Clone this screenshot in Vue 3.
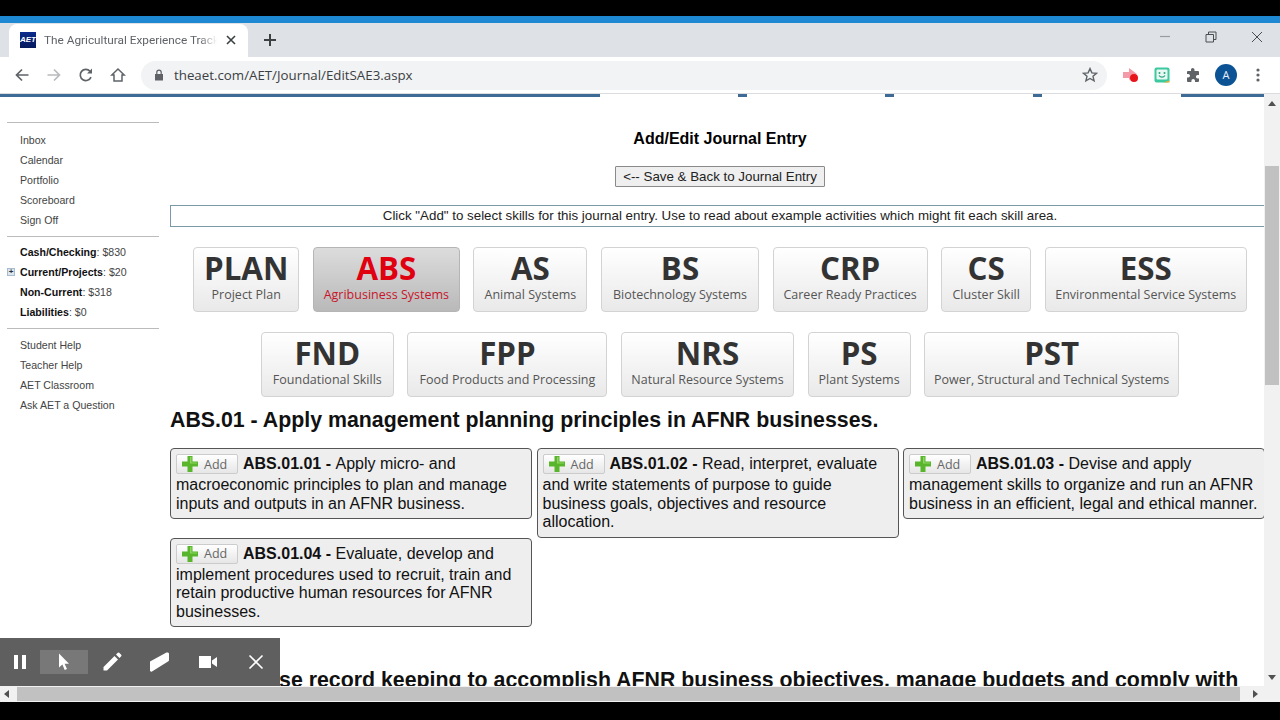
<script setup>
const navGaps = [
  { w: 600, on: true }, { w: 138, on: false }, { w: 9, on: true }, { w: 138, on: false },
  { w: 9, on: true }, { w: 139, on: false }, { w: 9, on: true }, { w: 139, on: false }, { w: 83, on: true }
]
const links1 = ['Inbox', 'Calendar', 'Portfolio', 'Scoreboard', 'Sign Off']
const money = [
  { k: 'Cash/Checking', v: '$830' },
  { k: 'Current/Projects', v: '$20', plus: true },
  { k: 'Non-Current', v: '$318' },
  { k: 'Liabilities', v: '$0' }
]
const links2 = ['Student Help', 'Teacher Help', 'AET Classroom', 'Ask AET a Question']
const row1 = [
  { c: 'PLAN', t: 'Project Plan', w: 106 },
  { c: 'ABS', t: 'Agribusiness Systems', w: 147, active: true },
  { c: 'AS', t: 'Animal Systems', w: 114 },
  { c: 'BS', t: 'Biotechnology Systems', w: 158 },
  { c: 'CRP', t: 'Career Ready Practices', w: 155 },
  { c: 'CS', t: 'Cluster Skill', w: 90 },
  { c: 'ESS', t: 'Environmental Service Systems', w: 202 }
]
const row2 = [
  { c: 'FND', t: 'Foundational Skills', w: 133 },
  { c: 'FPP', t: 'Food Products and Processing', w: 200 },
  { c: 'NRS', t: 'Natural Resource Systems', w: 173 },
  { c: 'PS', t: 'Plant Systems', w: 103 },
  { c: 'PST', t: 'Power, Structural and Technical Systems', w: 255 }
]
const cards = [
  { c: 'ABS.01.01', t: 'Apply micro- and macroeconomic principles to plan and manage inputs and outputs in an AFNR business.' },
  { c: 'ABS.01.02', t: 'Read, interpret, evaluate and write statements of purpose to guide business goals, objectives and resource allocation.' },
  { c: 'ABS.01.03', t: 'Devise and apply management skills to organize and run an AFNR business in an efficient, legal and ethical manner.' },
  { c: 'ABS.01.04', t: 'Evaluate, develop and implement procedures used to recruit, train and retain productive human resources for AFNR businesses.' }
]
</script>

<template>
  <div class="screen">
    <div class="blackbar"></div>
    <div class="bluebar"></div>
    <div class="tabstrip">
      <div class="tab">
        <span class="favicon">AET</span>
        <span class="tabtitle">The Agricultural Experience Tracker</span>
        <svg class="tabclose" width="10" height="10" viewBox="0 0 10 10"><path d="M1 1l8 8M9 1l-8 8" stroke="#3c4043" stroke-width="1.6" fill="none"/></svg>
      </div>
      <svg class="newtab" width="14" height="14" viewBox="0 0 14 14"><path d="M7 1v12M1 7h12" stroke="#3c4043" stroke-width="2" fill="none"/></svg>
      <div class="winbtns">
        <svg width="12" height="12" viewBox="0 0 12 12"><path d="M1 5.5h10" stroke="#9a9ca0" stroke-width="1.2" fill="none"/></svg>
        <svg width="12" height="12" viewBox="0 0 12 12"><path d="M1 3.5h7.5v7.5H1zM3.5 3.5V1H11v7.5H8.5" stroke="#4a4c50" stroke-width="1" fill="none"/></svg>
        <svg width="12" height="12" viewBox="0 0 12 12"><path d="M1 1l10 10M11 1L1 11" stroke="#4a4c50" stroke-width="1" fill="none"/></svg>
      </div>
    </div>
    <div class="toolbar">
      <div class="navicons">
        <svg width="16" height="16" viewBox="0 0 16 16"><path d="M14.5 8H2.5M8 2.5L2.5 8 8 13.5" stroke="#5f6368" stroke-width="1.7" fill="none"/></svg>
        <svg width="16" height="16" viewBox="0 0 16 16"><path d="M1.5 8h12M8 2.5L13.5 8 8 13.5" stroke="#b8babd" stroke-width="1.7" fill="none"/></svg>
        <svg width="16" height="16" viewBox="0 0 16 16"><path d="M13 10.2A5.6 5.6 0 1 1 12 4.2" stroke="#5f6368" stroke-width="1.7" fill="none"/><path d="M14 1.5v5h-5z" fill="#5f6368"/></svg>
        <svg width="16" height="16" viewBox="0 0 16 16"><path d="M8 2L1.8 8H4v6h8V8h2.2z" stroke="#5f6368" stroke-width="1.5" fill="none"/></svg>
      </div>
      <div class="omnibox">
        <svg width="10" height="12" viewBox="0 0 10 12"><path d="M1 5h8v6.5H1z" fill="#5f6368"/><path d="M2.8 5V3.4a2.2 2.2 0 0 1 4.4 0V5" stroke="#5f6368" stroke-width="1.2" fill="none"/></svg>
        <span class="url">theaet.com/AET/Journal/EditSAE3.aspx</span>
        <svg class="star" width="16" height="16" viewBox="0 0 16 16"><path d="M8 1.6l1.9 4.3 4.6.4-3.5 3 1.1 4.6L8 11.5l-4.1 2.4L5 9.3l-3.5-3 4.6-.4z" stroke="#5f6368" stroke-width="1.4" fill="none"/></svg>
      </div>
      <div class="exticons">
        <svg width="18" height="16" viewBox="0 0 18 16"><path d="M2 5h6v6H2z" fill="#f29aa8"/><path d="M8 1l8 6-8 6z" fill="#f29aa8"/><circle cx="13" cy="11" r="4" fill="#e8141c"/></svg>
        <svg width="16" height="16" viewBox="0 0 16 16"><rect x="0.5" y="0.5" width="15" height="15" rx="2" fill="#3cc9a0"/><rect x="2.5" y="2.5" width="11" height="10" rx="1" fill="#e9f8f2"/><circle cx="5.5" cy="6" r="1" fill="#27a37e"/><circle cx="10.5" cy="6" r="1" fill="#27a37e"/><path d="M5 8.5c1.5 2.2 4.5 2.2 6 0" stroke="#27a37e" stroke-width="1.2" fill="none"/><path d="M9 15.5l6.5-2v2z" fill="#e3b23c"/></svg>
        <svg width="16" height="16" viewBox="0 0 16 16"><path d="M6.5 1.5a1.8 1.8 0 0 1 3 1.2V4H13a1 1 0 0 1 1 1v3h-1.3a1.8 1.8 0 0 0 0 3.6H14V14a1 1 0 0 1-1 1h-3v-1.3a1.8 1.8 0 0 0-3.6 0V15H3a1 1 0 0 1-1-1v-3.5h1.2a1.8 1.8 0 0 0 0-3.6H2V5a1 1 0 0 1 1-1h3V2.7c0-.5.2-.9.5-1.2z" fill="#5f6368"/></svg>
        <span class="avatar">A</span>
        <svg class="dots" width="4" height="14" viewBox="0 0 4 14"><circle cx="2" cy="2" r="1.6" fill="#5f6368"/><circle cx="2" cy="7" r="1.6" fill="#5f6368"/><circle cx="2" cy="12" r="1.6" fill="#5f6368"/></svg>
      </div>
    </div>

    <div class="pagearea">
      <div class="viewport">
        <div class="navline">
          <div v-for="(g, i) in navGaps" :key="i" class="navseg" :class="{ on: g.on }" :style="{ width: g.w + 'px' }"></div>
        </div>
        <div class="content">
          <aside class="sidebar">
            <hr class="rule first" />
            <a v-for="l in links1" :key="l" class="slink">{{ l }}</a>
            <hr class="rule" />
            <div v-for="m in money" :key="m.k" class="slink money">
              <span v-if="m.plus" class="expander">+</span>
              <b>{{ m.k }}</b>: {{ m.v }}
            </div>
            <hr class="rule last" />
            <a v-for="l in links2" :key="l" class="slink">{{ l }}</a>
          </aside>
          <main class="main">
            <h1 class="title">Add/Edit Journal Entry</h1>
            <div class="backwrap"><button class="backbtn">&lt;-- Save &amp; Back to Journal Entry</button></div>
            <div class="notice">Click "Add" to select skills for this journal entry. Use to read about example activities which might fit each skill area.</div>
            <div class="catrow">
              <div v-for="b in row1" :key="b.c" class="cat" :class="{ active: b.active }" :style="{ width: b.w + 'px' }">
                <div class="code">{{ b.c }}</div>
                <div class="catname">{{ b.t }}</div>
              </div>
            </div>
            <div class="catrow second">
              <div v-for="b in row2" :key="b.c" class="cat" :style="{ width: b.w + 'px' }">
                <div class="code">{{ b.c }}</div>
                <div class="catname">{{ b.t }}</div>
              </div>
            </div>
            <h2 class="standard">ABS.01 - Apply management planning principles in AFNR businesses.</h2>
            <div class="cards">
              <div v-for="c in cards" :key="c.c" class="card">
                <span class="addbtn">
                  <svg width="18" height="18" viewBox="0 0 18 18"><path d="M6.5 1h5v5.5H17v5h-5.5V17h-5v-5.5H1v-5h5.5z" fill="#58b52c"/><path d="M7.5 2h3v5.5H16v1H9V2z" fill="#8ed65f"/></svg>
                  <span>Add</span>
                </span>
                <b>{{ c.c }} - </b>{{ c.t }}
              </div>
            </div>
            <h2 class="standard next">ABS.02 - Use record keeping to accomplish AFNR business objectives, manage budgets and comply with regulations.</h2>
          </main>
        </div>
      </div>
      <div class="vscroll">
        <span class="arrow up"></span>
        <div class="vspace"><div class="vthumb"></div></div>
        <span class="arrow down"></span>
      </div>
      <div class="recorder">
        <svg class="recicon" width="14" height="16" viewBox="0 0 14 16"><path d="M1 1h4v14H1zM9 1h4v14H9z" fill="#fff"/></svg>
        <span class="recactive">
          <svg width="14" height="18" viewBox="0 0 14 18"><path d="M2 0.5v14l3.4-3 2.3 5.5 2.3-1-2.4-5.3H12z" fill="#fff"/></svg>
        </span>
        <svg class="recicon" width="20" height="20" viewBox="0 0 20 20"><path d="M1.5 15l11-11 3.5 3.5-11 11H1.5zM14 2.5L15.8.8a1 1 0 0 1 1.4 0l2 2a1 1 0 0 1 0 1.4L17.5 6z" fill="#fff"/></svg>
        <svg class="recicon" width="22" height="20" viewBox="0 0 22 20"><path d="M1 9.5L17 .8c1-.5 3-.3 3 1V8c0 .7-.3 1.2-1 1.6L3 19.5c-1 .5-2 0-2-1z" fill="#fff"/></svg>
        <svg class="recicon" width="20" height="14" viewBox="0 0 20 14"><path d="M1 1h12v12H1zM14 5.5L19 2v10l-5-3.5z" fill="#fff"/></svg>
        <svg class="recicon" width="16" height="16" viewBox="0 0 16 16"><path d="M1.5 1.5l13 13M14.5 1.5l-13 13" stroke="#fff" stroke-width="1.6" fill="none"/></svg>
      </div>
    </div>
    <div class="hscroll">
      <span class="arrow left"></span>
      <div class="hthumb"></div>
      <span class="arrow right"></span>
    </div>
    <div class="blackfoot"></div>
  </div>
</template>

<style>
html, body { margin: 0; background: #000; }
</style>

<style scoped>
.screen { width: 1280px; height: 720px; display: flex; flex-direction: column; overflow: hidden; background: #fff; font-family: "Liberation Sans", Arial, sans-serif; }
.blackbar { height: 16px; background: #000; flex: none; }
.bluebar { height: 7px; background: #1f88d2; flex: none; }
.tabstrip { height: 34px; flex: none; background: #dee1e6; display: flex; align-items: flex-end; padding-left: 9px; position: relative; }
.tab { width: 239px; height: 33px; box-sizing: border-box; background: #fff; border-radius: 8px 8px 0 0; display: flex; align-items: center; padding: 0 12px 1px 11px; }
.favicon { width: 16px; height: 16px; flex: none; background: linear-gradient(#0a2a8c, #061a5c); color: #fff; font: italic 700 8px/16px "Liberation Sans", sans-serif; text-align: center; overflow: hidden; }
.tabtitle { margin-left: 8px; flex: 1; min-width: 0; font: 11.8px Roboto, sans-serif; color: #5f6368; white-space: nowrap; overflow: hidden; -webkit-mask-image: linear-gradient(90deg, #000 90%, transparent); mask-image: linear-gradient(90deg, #000 90%, transparent); }
.tabclose { margin-left: 9px; flex: none; }
.newtab { margin: 0 0 10px 15px; }
.winbtns { margin-left: auto; display: flex; gap: 34px; padding: 0 17px 0 0; align-self: flex-start; margin-top: 8px; }
.toolbar { height: 37px; flex: none; background: #fff; display: flex; align-items: center; box-sizing: border-box; padding-left: 14px; border-bottom: 1px solid #dadce0; }
.navicons { display: flex; gap: 16px; width: 127px; flex: none; }
.omnibox { width: 966px; height: 29px; flex: none; border-radius: 15px; background: #f1f3f4; display: flex; align-items: center; padding: 0 9px 0 13px; box-sizing: border-box; }
.url { margin-left: 10px; font: 13.3px "Open Sans", sans-serif; color: #3c4043; }
.star { margin-left: auto; }
.exticons { display: flex; align-items: center; gap: 15px; margin-left: 14px; }
.avatar { width: 22px; height: 22px; border-radius: 50%; background: #0b5394; color: #e8f0f8; font: 11px/22px "Open Sans", sans-serif; text-align: center; margin-left: -1px; }
.dots { margin-left: 4px; }
.pagearea { height: 592px; flex: none; display: flex; position: relative; }
.viewport { width: 1264px; flex: none; overflow: hidden; display: flex; flex-direction: column; }
.navline { height: 3px; flex: none; display: flex; }
.navseg { height: 3px; flex: none; }
.navseg.on { background: #3d6b95; }
.content { display: flex; flex: none; width: 1270px; }
.sidebar { width: 170px; flex: none; box-sizing: border-box; padding: 25px 11px 0 7px; display: flex; flex-direction: column; font-size: 10.6px; color: #333; }
.rule { border: 0; border-top: 1px solid #bbb; margin: 6px 0 5px; height: 0; width: 152px; }
.rule.first { margin-top: 0; margin-bottom: 7px; }
.rule.last { margin-bottom: 6px; }
.slink { height: 20px; line-height: 20px; padding-left: 13px; color: #444; white-space: nowrap; position: relative; }
.slink.money { color: #444; }
.slink.money b { color: #111; }
.expander { position: absolute; left: 0; top: 6px; box-sizing: border-box; width: 8px; height: 8px; border: 1px solid #a8bccf; background: #dde5ec; font: 700 8px/6px "Liberation Sans", sans-serif; text-align: center; color: #234; }
.main { width: 1100px; flex: none; display: flex; flex-direction: column; color: #000; }
.title { margin: 32px 0 0; height: 19px; font-size: 16px; line-height: 19px; font-weight: 700; text-align: center; }
.backwrap { margin-top: 18px; display: flex; justify-content: center; }
.backbtn { width: 210px; height: 21px; box-sizing: border-box; padding: 0 0 1px; background: #efefef; border: 1px solid #8a8a8a; border-radius: 1px; font: 13.33px "Liberation Sans", sans-serif; color: #222; }
.notice { margin-top: 18px; height: 22px; box-sizing: border-box; border: 1px solid #7a9aa8; line-height: 19px; font-size: 13.33px; text-align: center; color: #222; }
.catrow { margin-top: 20px; display: flex; justify-content: center; gap: 13.6px; }
.catrow.second { margin-top: 20px; }
.cat { height: 65px; box-sizing: border-box; border: 1px solid #d3d3d3; border-radius: 4px; background: linear-gradient(#fff, #e9e9e9); text-align: center; font-family: "Open Sans", sans-serif; color: #333; }
.cat.active { background: linear-gradient(#dcdcdc, #b9b9b9); border-color: #b5b5b5; }
.code { font-size: 31.3px; font-weight: 700; line-height: 40px; margin-bottom: -2px; }
.catname { font-size: 12.5px; line-height: 17px; color: #555; white-space: nowrap; }
.cat.active .code { color: #e00010; }
.cat.active .catname { color: #c8142a; }
.standard { margin: 11px 0 0; font-size: 21.33px; line-height: 25px; font-weight: 700; color: #111; white-space: nowrap; }
.cards { margin-top: 15px; display: grid; grid-template-columns: 362px 362px 362px; column-gap: 4.5px; align-items: start; }
.card { box-sizing: border-box; background: #eee; border: 1px solid #555; border-radius: 4px; padding: 4px 5px 5px; font-size: 16px; line-height: 18.5px; color: #111; }
.addbtn { display: inline-flex; align-items: center; box-sizing: border-box; width: 62px; height: 20px; margin: 1px 5px 2px 0; padding-left: 4px; gap: 5px; vertical-align: middle; background: linear-gradient(#fff, #e6e6e6); border: 1px solid #ccc; border-radius: 2px; font: 12.5px "Open Sans", sans-serif; color: #666; }
.standard.next { margin-top: 41px; white-space: normal; }
.vscroll { width: 16px; flex: none; background: #f1f1f1; display: flex; flex-direction: column; align-items: center; }
.vspace { flex: 1; width: 100%; position: relative; padding-top: 56px; box-sizing: border-box; }
.vthumb { height: 219px; margin: 0 1px; background: #c1c1c1; }
.arrow { width: 0; height: 0; flex: none; border-style: solid; border-color: transparent; }
.arrow.up { margin: 7px 0 4px; border-width: 0 4px 5px; border-bottom-color: #505050; }
.arrow.down { margin: 4px 0 6px; border-width: 5px 4px 0; border-top-color: #505050; }
.arrow.left { margin: 0 8px 0 4px; border-width: 4px 5px 4px 0; border-right-color: #505050; }
.arrow.right { margin: 0 0 0 13px; border-width: 4px 0 4px 5px; border-left-color: #505050; }
.recorder { position: absolute; left: 0; bottom: 0; width: 280px; height: 48px; background: #5f5f5f; display: flex; align-items: center; }
.recicon { flex: none; width: 48px; }
.recicon:first-child { width: 40px; }
.recactive { width: 48px; height: 24px; background: #787878; display: flex; align-items: center; justify-content: center; }
.hscroll { height: 16px; flex: none; background: #f1f1f1; display: flex; align-items: center; }
.hthumb { width: 1223px; height: 14px; background: #c1c1c1; }
.blackfoot { flex: 1; background: #000; }
</style>
